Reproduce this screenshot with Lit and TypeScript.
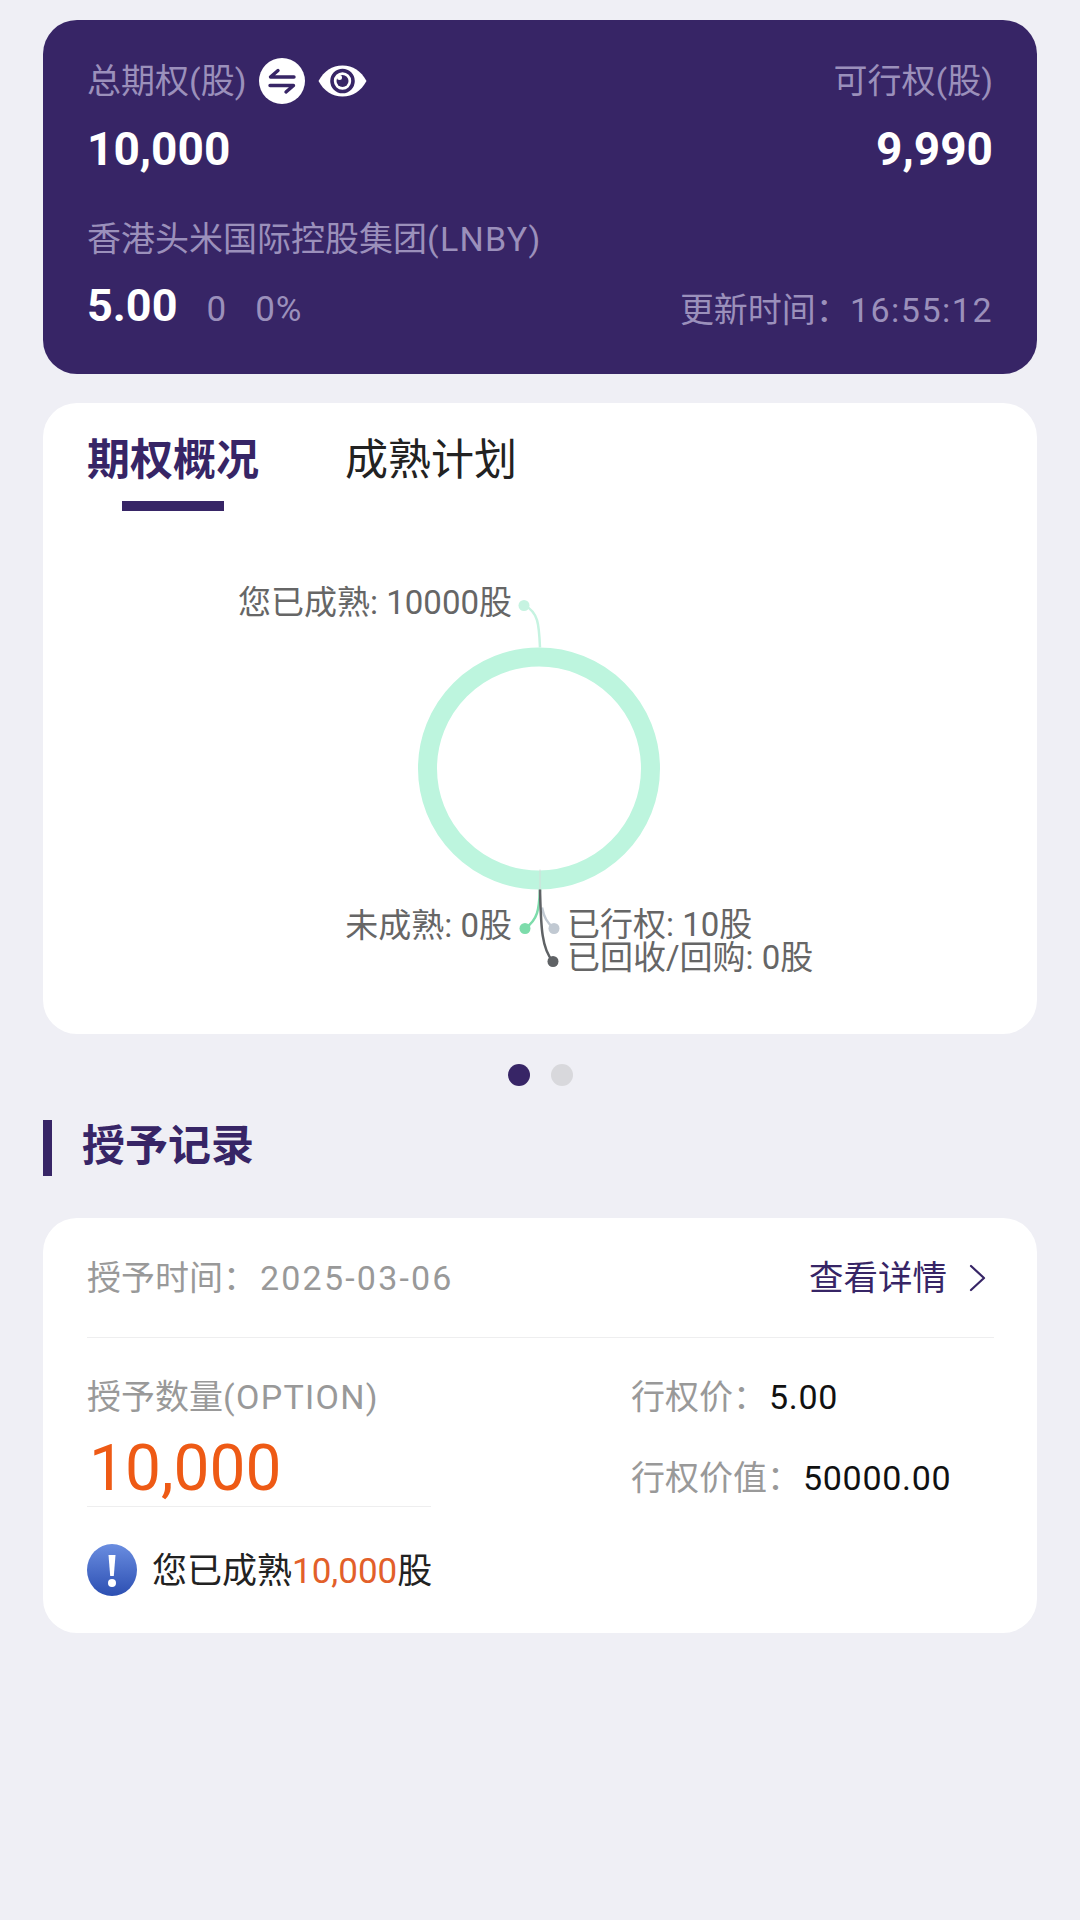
import { LitElement, html, css } from "lit";
import { customElement } from "lit/decorators.js";

@customElement("app-root")
export class AppRoot extends LitElement {
  static styles = css`
    :host {
      display: block;
      width: 1080px;
      height: 1920px;
      overflow: hidden;
      background: #efeff5;
      font-family: "Roboto", "Noto Sans CJK SC", sans-serif;
      color: #222;
    }
    * { box-sizing: border-box; }
    .page { padding: 20px 43px 0; display: flex; flex-direction: column; }
    .hero {
      height: 354px;
      background: #372566;
      border-radius: 34px;
      padding: 38px 44px 0;
      color: #9b90bb;
    }
    .row { display: flex; justify-content: space-between; align-items: center; }
    .lbl { font-size: 34px; line-height: 40px; }
    .lbl-group { display: flex; align-items: center; }
    .swap { width: 46px; height: 46px; margin-left: 13px; display: block; }
    .eye { width: 49px; height: 32px; margin-left: 13px; display: block; }
    .num { font-size: 46px; line-height: 52px; font-weight: 700; color: #fff; }
    .num.q { font-size: 45px; }
    .r2 { margin-top: 19px; }
    .r3 { margin-top: 44px; font-size: 34px; line-height: 40px; }
    .ls { letter-spacing: 1.3px; }
    .r4 { margin-top: 21px; }
    .quote { display: flex; align-items: center; }
    .chg { font-size: 35px; letter-spacing: 1px; margin-left: 29px; margin-top: 7px; }
    .chg2 { margin-left: 28px; }
    .time { font-size: 34px; line-height: 40px; margin-top: 8px; }
    .time span { letter-spacing: 1.500px; }

    .panel { height: 631px; margin-top: 29px; background: #fff; border-radius: 34px; display: flex; flex-direction: column; }
    .tabs { display: flex; padding: 32px 44px 0; gap: 86px; }
    .tab { display: flex; flex-direction: column; align-items: center; font-size: 43px; line-height: 50px; color: #222; }
    .tab.on { color: #372566; font-weight: 700; }
    .bar { width: 102px; height: 10px; margin-top: 16px; background: #372566; }
    .tab .blank { height: 10px; margin-top: 16px; }
    .chart { position: relative; flex: 1; }
    .chart svg { position: absolute; inset: 0; width: 100%; height: 100%; display: block; }
    .cl { position: absolute; font-size: 33px; line-height: 33px; color: #666; white-space: nowrap; }
    .l1 { right: 525px; top: 75px; }
    .l2 { right: 525px; top: 398px; }
    .l3 { left: 524px; top: 397px; }
    .l4 { left: 524px; top: 430px; }

    .dots { display: flex; justify-content: center; gap: 21px; margin-top: 30px; }
    .dot { width: 22px; height: 22px; border-radius: 50%; background: #d8d8dc; }
    .dot.on { background: #372566; }

    .sec { display: flex; align-items: center; height: 56px; margin-top: 34px; border-left: 9px solid #372566; padding: 0 0 12px 30px; font-size: 43px; font-weight: 700; color: #372566; }

    .rec { margin-top: 42px; height: 415px; background: #fff; border-radius: 34px; padding: 40px 43px 0 44px; }
    .grey { color: #999; font-size: 34px; line-height: 40px; }
    .date { letter-spacing: 2.200px; margin-left: 3px; }
    .link { display: flex; align-items: center; color: #372566; font-size: 34.500px; line-height: 40px; }
    .link svg { width: 17px; height: 28px; margin-left: 22px; margin-right: 8px; }
    .hr { height: 1px; background: #eeeeef; margin-top: 39px; }
    .body { display: flex; }
    .left { width: 344px; padding-top: 39px; }
    .big { font-size: 64px; line-height: 72px; margin: 16px 0 0 2px; color: #ee5a15; }
    .hr2 { height: 1px; background: #eeeeef; margin-top: 1px; }
    .info { display: flex; align-items: center; height: 52px; margin-top: 37px; font-size: 35px; color: #222; white-space: nowrap; }
    .info svg { width: 50px; height: 52px; margin-right: 15px; flex: none; }
    .info span { padding-bottom: 6px; }
    .info em { font-style: normal; color: #e2602a; }
    .right { margin-left: 200px; padding-top: 39px; display: flex; flex-direction: column; gap: 41px; }
    .kv { display: flex; font-size: 34px; line-height: 40px; color: #999; white-space: nowrap; }
    .kv b { font-weight: 400; color: #111; letter-spacing: 0.700px; margin-left: 2px; }
  `;

  render() {
    return html`<div class="page">
      <section class="hero">
        <div class="row lbl">
          <div class="lbl-group">总期权(股)
            <svg class="swap" viewBox="0 0 46 46">
              <circle cx="23" cy="23" r="23" fill="#fff"/>
              <path d="M35 19H11.500L19 12.500" fill="none" stroke="#372566" stroke-width="3.400" stroke-linecap="round" stroke-linejoin="round"/>
              <path d="M11 27.500H34.500L27 34" fill="none" stroke="#372566" stroke-width="3.400" stroke-linecap="round" stroke-linejoin="round"/>
            </svg>
            <svg class="eye" viewBox="0 0 49 32">
              <path d="M0.500 16C6 6 14 0.500 24.500 0.500S43 6 48.500 16C43 26 35 31.500 24.500 31.500S6 26 0.500 16Z" fill="#fff"/>
              <circle cx="24.500" cy="16" r="10.500" fill="none" stroke="#372566" stroke-width="3.600"/>
              <circle cx="24.500" cy="16" r="6" fill="#372566"/>
              <circle cx="21.500" cy="12.500" r="2.500" fill="#fff"/>
            </svg>
          </div>
          <div>可行权(股)</div>
        </div>
        <div class="row r2"><div class="num">10,000</div><div class="num">9,990</div></div>
        <div class="r3">香港头米国际控股集团<span class="ls">(LNBY)</span></div>
        <div class="row r4">
          <div class="quote"><span class="num q">5.00</span><span class="chg">0</span><span class="chg chg2">0%</span></div>
          <div class="time">更新时间：<span>16:55:12</span></div>
        </div>
      </section>

      <section class="panel">
        <div class="tabs">
          <div class="tab on">期权概况<div class="bar"></div></div>
          <div class="tab">成熟计划<div class="blank"></div></div>
        </div>
        <div class="chart">
          <svg viewBox="0 0 994 522" fill="none">
            <circle cx="496" cy="257" r="111.500" stroke="#bdf5de" stroke-width="19"/>
            <path d="M497 136C496 112 495 101 482 94" stroke="#c6f3e1" stroke-width="2.500"/>
            <circle cx="481" cy="94" r="5.500" fill="#c6f3e1"/>
            <path d="M497 378C496 398 495 408 482 417" stroke="#7ddcab" stroke-width="2.500"/>
            <circle cx="482" cy="417" r="5.500" fill="#7ddcab"/>
            <path d="M499 396C501 406 504 411 511 417" stroke="#c1c9d2" stroke-width="2.500"/>
            <circle cx="511" cy="417" r="5.500" fill="#c1c9d2"/>
            <path d="M497 358V378" stroke="#d4dcd9" stroke-width="1"/>
            <path d="M497 378C498 412 498 437 510 450" stroke="#5f6265" stroke-width="2.500"/>
            <circle cx="510" cy="450" r="5.500" fill="#5f6265"/>
          </svg>
          <div class="cl l1">您已成熟: 10000股</div>
          <div class="cl l2">未成熟: 0股</div>
          <div class="cl l3">已行权: 10股</div>
          <div class="cl l4">已回收/回购: 0股</div>
        </div>
      </section>

      <div class="dots"><div class="dot on"></div><div class="dot"></div></div>

      <div class="sec">授予记录</div>

      <section class="rec">
        <div class="row">
          <div class="grey">授予时间：<span class="date">2025-03-06</span></div>
          <div class="link">查看详情
            <svg viewBox="0 0 17 28" fill="none"><path d="M2 2L15 14L2 26" stroke="#372566" stroke-width="2.200" stroke-linecap="round" stroke-linejoin="round"/></svg>
          </div>
        </div>
        <div class="hr"></div>
        <div class="body">
          <div class="left">
            <div class="grey">授予数量<span class="ls">(OPTION)</span></div>
            <div class="big">10,000</div>
            <div class="hr2"></div>
            <div class="info">
              <svg viewBox="0 0 50 52">
                <defs><linearGradient id="g" x1="0" y1="0" x2="0" y2="1"><stop offset="0" stop-color="#6a8de0"/><stop offset="1" stop-color="#2c4fb2"/></linearGradient></defs>
                <ellipse cx="25" cy="26" rx="25" ry="26" fill="url(#g)"/>
                <path d="M21.500 11H28.500L26.800 32H23.200Z" fill="#fff"/>
                <circle cx="25" cy="39" r="4" fill="#fff"/>
              </svg>
              <span>您已成熟<em>10,000</em>股</span>
            </div>
          </div>
          <div class="right">
            <div class="kv">行权价：<b>5.00</b></div>
            <div class="kv">行权价值：<b>50000.00</b></div>
          </div>
        </div>
      </section>
    </div>`;
  }
}
